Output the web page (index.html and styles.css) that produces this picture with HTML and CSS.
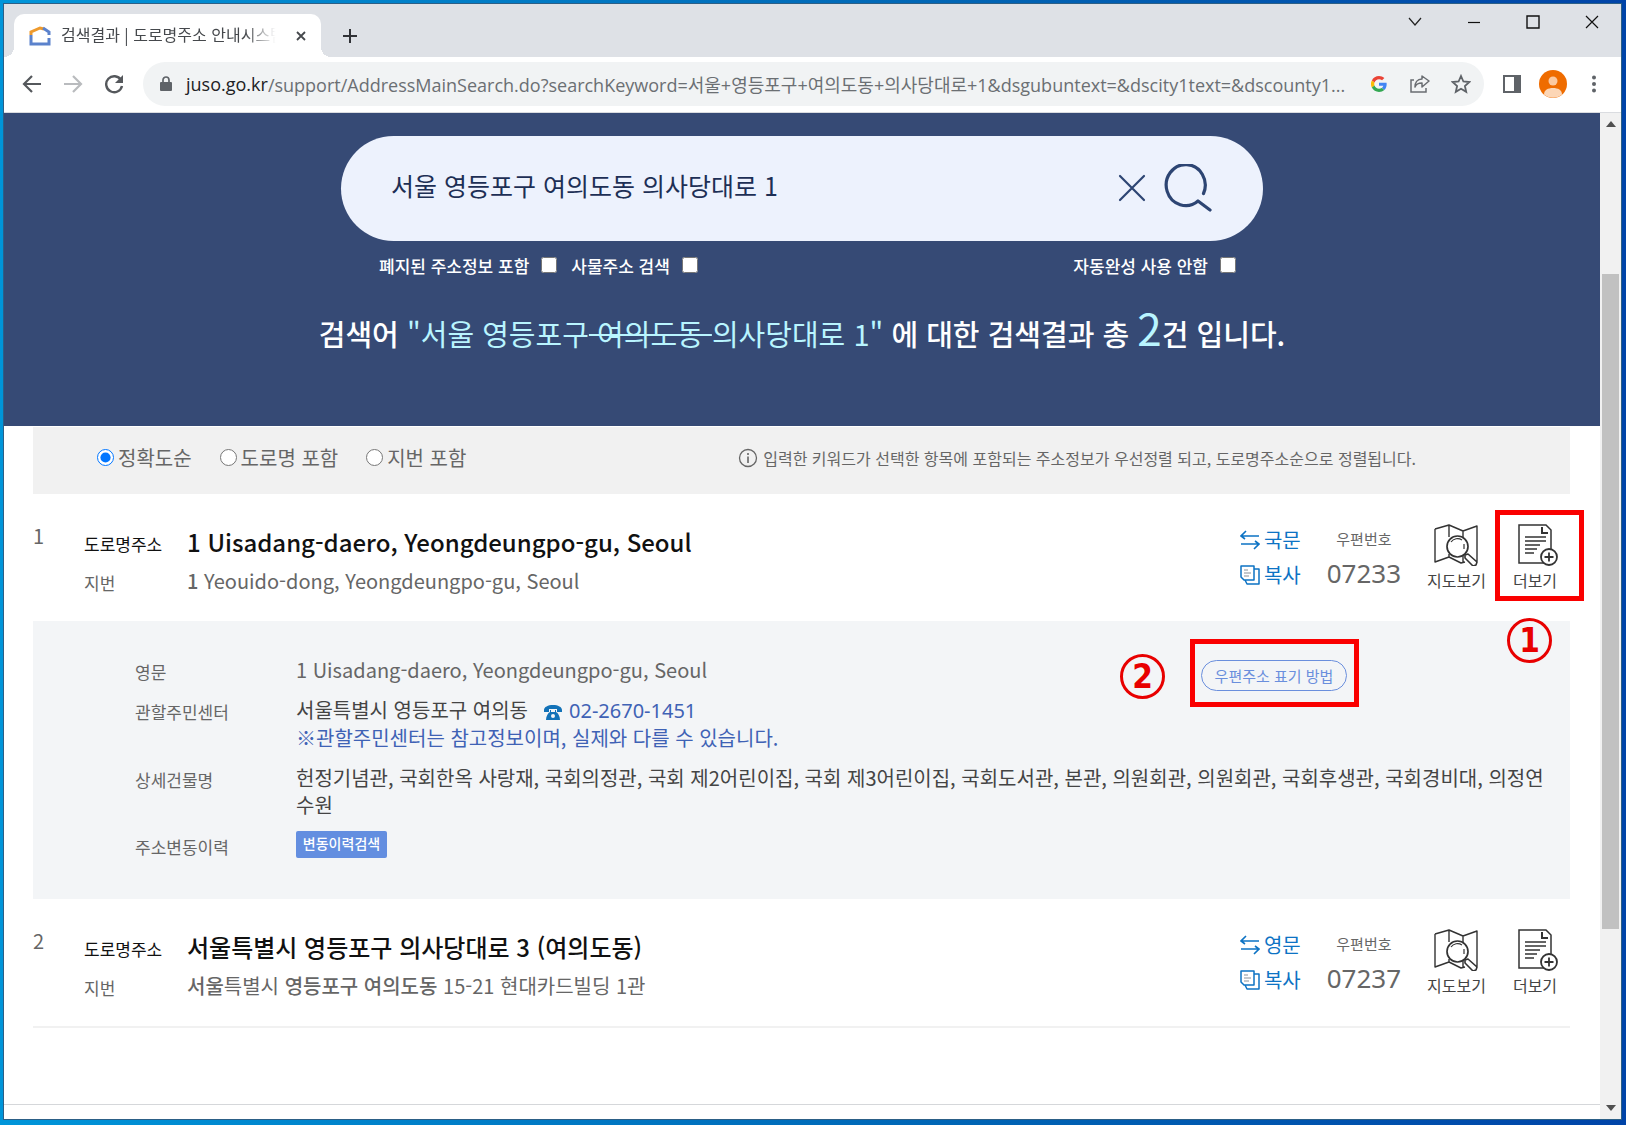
FILE: index.html
```html
<!DOCTYPE html>
<html lang="ko">
<head>
<meta charset="utf-8">
<meta name="viewport" content="width=device-width, initial-scale=1">
<title>검색결과 | 도로명주소 안내시스템</title>
<link rel="stylesheet" href="styles.css">
</head>
<body>
<svg class="sprite" aria-hidden="true">
  <symbol id="i-swap" viewBox="0 0 20 20"><path d="M19 6H1M6 1 1 6l4 3M1 14h18M14 19l5-5-4-3" fill="none" stroke="currentColor" stroke-width="1.6"/></symbol>
  <symbol id="i-copy" viewBox="0 0 20 20"><path d="M1 1h13v14H4l-3-3zM14 4h5v15H7l-2-4" fill="none" stroke="currentColor" stroke-width="1.5" stroke-linejoin="round"/><path d="M4 5h4M4 8h7M4 11h5" stroke="#8a9199" stroke-width="1"/></symbol>
  <symbol id="i-map" viewBox="0 0 45 42"><path d="M1 5 15 1l14 6 14-5v35l-5 1M1 5v33l14-5 12 6 4-1M15 1v12M15 30v3M29 7v6M29 32v7" fill="none" stroke="#333" stroke-width="1.4" stroke-linejoin="round"/><circle cx="23.500" cy="22.500" r="10.500" fill="#fff" stroke="#333" stroke-width="1.7"/><path d="M17 18a8 8 0 0 1 11-2M30 20v5" fill="none" stroke="#333" stroke-width="1.2"/><path d="m31 31 3-1 9 8-1 3-3 1-8-8z" fill="#fff" stroke="#333" stroke-width="1.6" stroke-linejoin="round"/></symbol>
  <symbol id="i-more" viewBox="0 0 40 42"><path d="M1 1h27l5 5v33H1z" fill="#fff" stroke="#333" stroke-width="1.5"/><path d="M24 3v6h6" fill="none" stroke="#333" stroke-width="2"/><path d="M7 13h21M7 17h21M7 21h15M7 25h12M7 29h9" stroke="#333" stroke-width="1.3"/><circle cx="31" cy="33" r="8" fill="#fff" stroke="#333" stroke-width="1.8"/><path d="M31 28.500v9M26.500 33h9" stroke="#333" stroke-width="1.8"/></symbol>
</svg>

<div class="window">
  <header class="tabstrip">
    <div class="tab">
      <svg class="favicon" viewBox="0 0 22 20"><path d="M2 9V6l9-4 4 1" fill="none" stroke="#ee9a2d" stroke-width="3"/><path d="M14 2l6 4v3M2 9v9h18v-6" fill="none" stroke="#5b82cc" stroke-width="3"/></svg>
      <span class="tab-title">검색결과 | 도로명주소 안내시스템</span>
      <button class="tab-close" aria-label="탭 닫기"><svg viewBox="0 0 12 12" width="12" height="12"><path d="m2 2 8 8M10 2l-8 8" stroke="#45484c" stroke-width="1.8"/></svg></button>
    </div>
    <button class="new-tab" aria-label="새 탭"><svg viewBox="0 0 16 16" width="16" height="16"><path d="M8 1v14M1 8h14" stroke="#303236" stroke-width="2"/></svg></button>
    <div class="window-controls">
      <button aria-label="탭 검색"><svg viewBox="0 0 14 14" width="14" height="14"><path d="m1 3 6 7 6-7" fill="none" stroke="#222" stroke-width="1.200"/></svg></button>
      <button aria-label="최소화"><svg viewBox="0 0 14 14" width="14" height="14"><path d="M1 7.500h12" stroke="#111" stroke-width="1.200"/></svg></button>
      <button aria-label="최대화"><svg viewBox="0 0 14 14" width="14" height="14"><path d="M1 1h12v12H1z" fill="none" stroke="#111" stroke-width="1.400"/></svg></button>
      <button aria-label="닫기"><svg viewBox="0 0 14 14" width="14" height="14"><path d="m1 1 12 12M13 1 1 13" stroke="#111" stroke-width="1.200"/></svg></button>
    </div>
  </header>

  <div class="toolbar">
    <nav class="nav-buttons">
      <button aria-label="뒤로"><svg viewBox="0 0 20 20" width="20" height="20"><path d="M19 10H2M10 2l-8 8 8 8" fill="none" stroke="#55585c" stroke-width="2.200"/></svg></button>
      <button aria-label="앞으로"><svg viewBox="0 0 20 20" width="20" height="20"><path d="M1 10h17M10 2l8 8-8 8" fill="none" stroke="#b9bbbe" stroke-width="2.200"/></svg></button>
      <button aria-label="새로고침"><svg viewBox="0 0 20 20" width="20" height="20"><path d="M17 6a8 8 0 1 0 1 6" fill="none" stroke="#55585c" stroke-width="2.400"/><path d="M19 1v8h-8z" fill="#55585c"/></svg></button>
    </nav>
    <div class="omnibox">
      <svg class="lock" viewBox="0 0 12 16"><path d="M3 7V4a3 3 0 0 1 6 0v3" fill="none" stroke="#5f6368" stroke-width="1.700"/><rect x="0" y="6" width="12" height="9" rx="1" fill="#5f6368"/></svg>
      <label class="host" for="url">juso.go.kr</label>
      <input class="url" id="url" type="text" value="/support/AddressMainSearch.do?searchKeyword=서울+영등포구+여의도동+의사당대로+1&amp;dsgubuntext=&amp;dscity1text=&amp;dscounty1...">
      <div class="omni-actions">
        <button aria-label="Google"><svg viewBox="0 0 48 48" width="16" height="16"><path fill="#ea4335" d="M24 9.500c3.500 0 6.700 1.200 9.200 3.600l6.900-6.900C35.900 2.400 30.500 0 24 0 14.600 0 6.500 5.400 2.600 13.200l8 6.200C12.400 13.700 17.700 9.500 24 9.500z"/><path fill="#4285f4" d="M47 24.600c0-1.600-.2-3.100-.4-4.600H24v9h12.900c-.6 3-2.200 5.500-4.700 7.200l7.700 6C44.400 38 47 31.800 47 24.600z"/><path fill="#fbbc05" d="M10.500 28.600a14.500 14.500 0 0 1 0-9.200l-8-6.200a24 24 0 0 0 0 21.600z"/><path fill="#34a853" d="M24 48c6.500 0 11.900-2.100 15.900-5.800l-7.700-6c-2.200 1.500-4.900 2.300-8.200 2.300-6.300 0-11.600-4.200-13.500-9.900l-8 6.200C6.500 42.600 14.600 48 24 48z"/></svg></button>
        <button aria-label="공유"><svg viewBox="0 0 20 18" width="20" height="18"><path d="M4 5H1v12h15v-4" fill="none" stroke="#6a6d71" stroke-width="1.500"/><path d="M12 4V1l7 5-7 6V8c-3 0-6 1-7 4 0-4 2-8 7-8z" fill="none" stroke="#6a6d71" stroke-width="1.500" stroke-linejoin="round"/></svg></button>
        <button aria-label="북마크"><svg viewBox="0 0 20 20" width="20" height="20"><path d="m10 2 2.400 5.500 6 .5-4.500 4 1.300 5.800L10 14.700l-5.200 3.100L6.100 12 1.600 8l6-.5z" fill="none" stroke="#5f6368" stroke-width="1.800"/></svg></button>
      </div>
    </div>
    <div class="browser-actions">
      <button aria-label="측면 패널"><svg viewBox="0 0 18 18" width="18" height="18"><path d="M1 1h16v16H1z" fill="none" stroke="#5f6368" stroke-width="2"/><path d="M11 1h6v16h-6z" fill="#5f6368"/></svg></button>
      <button aria-label="프로필"><svg viewBox="0 0 28 28" width="28" height="28"><circle cx="14" cy="14" r="14" fill="#ef6c00"/><circle cx="14" cy="11" r="4.500" fill="#fbc9a0"/><path d="M5 24.500c0-4.500 4-6.500 9-6.500s9 2 9 6.500a14 14 0 0 1-18 0z" fill="#fcd6b6"/></svg></button>
      <button aria-label="메뉴"><svg viewBox="0 0 4 18" width="4" height="18"><circle cx="2" cy="2.500" r="2" fill="#5f6368"/><circle cx="2" cy="9" r="2" fill="#5f6368"/><circle cx="2" cy="15.500" r="2" fill="#5f6368"/></svg></button>
    </div>
  </div>

  <div class="viewport">
    <main class="page">
      <section class="hero">
        <form class="search">
          <div class="search-box">
            <input class="keyword" type="text" aria-label="검색어" value="서울 영등포구 여의도동 의사당대로 1">
            <button type="button" aria-label="지우기"><svg viewBox="0 0 28 28" width="28" height="28"><path d="m2 2 24 24M26 2 2 26" stroke="#2d4573" stroke-width="2.200" stroke-linecap="round"/></svg></button>
            <button type="button" aria-label="검색"><svg viewBox="0 0 48 48" width="48" height="48"><path d="M39.500 29.500A19.500 20.500 0 1 0 34 37l12 9" fill="none" stroke="#2d4573" stroke-width="3.200" stroke-linecap="round" stroke-linejoin="round"/></svg></button>
          </div>
          <div class="search-options">
            <label>폐지된 주소정보 포함<input type="checkbox"></label>
            <label>사물주소 검색<input type="checkbox"></label>
            <label class="auto">자동완성 사용 안함<input type="checkbox"></label>
          </div>
        </form>
        <h1 class="summary">검색어 <span class="term">"서울 영등포구<s> 여의도동 </s>의사당대로 1"</span> 에 대한 검색결과 총 <span class="count">2</span>건 입니다.</h1>
      </section>

      <div class="content">
        <div class="sortbar">
          <label><input type="radio" name="sort" checked>정확도순</label>
          <label><input type="radio" name="sort">도로명 포함</label>
          <label><input type="radio" name="sort">지번 포함</label>
          <p class="sort-info"><svg viewBox="0 0 20 20" width="20" height="20"><circle cx="10" cy="10" r="8.500" fill="none" stroke="#666" stroke-width="1.300"/><path d="M10 8.500V15M10 5v2" stroke="#666" stroke-width="1.600"/></svg>입력한 키워드가 선택한 항목에 포함되는 주소정보가 우선정렬 되고, 도로명주소순으로 정렬됩니다.</p>
        </div>

        <article class="result">
          <span class="number">1</span>
          <dl class="address">
            <dt class="road">도로명주소</dt><dd class="road">1 Uisadang-daero, Yeongdeungpo-gu, Seoul</dd>
            <dt>지번</dt><dd><b>1</b> Yeouido-dong, Yeongdeungpo-gu, Seoul</dd>
          </dl>
          <div class="actions">
            <div class="links">
              <a href="#"><svg><use href="#i-swap"/></svg>국문</a>
              <a href="#"><svg><use href="#i-copy"/></svg>복사</a>
            </div>
            <div class="zip"><span>우편번호</span><strong>07233</strong></div>
            <button class="tool"><svg class="map"><use href="#i-map"/></svg>지도보기</button>
            <button class="tool more"><svg><use href="#i-more"/></svg>더보기<span class="mark"></span><span class="badge">1</span></button>
          </div>
        </article>

        <dl class="details">
          <dt>영문</dt>
          <dd class="english">1 Uisadang-daero, Yeongdeungpo-gu, Seoul<button class="postal">우편주소 표기 방법<span class="mark"></span><span class="badge">2</span></button></dd>
          <dt>관할주민센터</dt>
          <dd class="dark">서울특별시 영등포구 여의동<a class="phone" href="tel:02-2670-1451"><svg viewBox="0 0 18 15" width="18" height="15"><path d="M0 5c0-3 4-5 9-5s9 2 9 5v2h-5V4H5v3H0z" fill="#1272b8"/><path d="M6 5h1v2h4V5h1v2c2 1 4 4 4 8H2c0-4 2-7 4-8z" fill="#1272b8"/><circle cx="9" cy="11" r="2" fill="#f3f5f7"/></svg>02-2670-1451</a>
            <p class="note">※관할주민센터는 참고정보이며, 실제와 다를 수 있습니다.</p></dd>
          <dt>상세건물명</dt>
          <dd class="dark">헌정기념관, 국회한옥 사랑재, 국회의정관, 국회 제2어린이집, 국회 제3어린이집, 국회도서관, 본관, 의원회관, 의원회관, 국회후생관, 국회경비대, 의정연수원</dd>
          <dt>주소변동이력</dt>
          <dd><button class="history">변동이력검색</button></dd>
        </dl>

        <article class="result last">
          <span class="number">2</span>
          <dl class="address">
            <dt class="road">도로명주소</dt><dd class="road">서울특별시 영등포구 의사당대로 3 (여의도동)</dd>
            <dt>지번</dt><dd><b>서울</b>특별시 <b>영등포구 여의도동</b> 15-21 현대카드빌딩 1관</dd>
          </dl>
          <div class="actions">
            <div class="links">
              <a href="#"><svg><use href="#i-swap"/></svg>영문</a>
              <a href="#"><svg><use href="#i-copy"/></svg>복사</a>
            </div>
            <div class="zip"><span>우편번호</span><strong>07237</strong></div>
            <button class="tool"><svg class="map"><use href="#i-map"/></svg>지도보기</button>
            <button class="tool more"><svg><use href="#i-more"/></svg>더보기</button>
          </div>
        </article>
      </div>
      <footer class="page-end"></footer>
    </main>
    <div class="scrollbar" aria-hidden="true">
      <svg viewBox="0 0 10 6" width="10" height="6"><path d="M0 6 5 0l5 6z" fill="#505050"/></svg>
      <div class="track"><div class="thumb"></div></div>
      <svg viewBox="0 0 10 6" width="10" height="6"><path d="M0 0h10L5 6z" fill="#505050"/></svg>
    </div>
  </div>
</div>
</body>
</html>
```

FILE: styles.css
```css
* { box-sizing: border-box; }

body {
  margin: 0;
  min-height: 100vh;
  display: flex;
  padding: 3px 4px 5px 3px;
  background: linear-gradient(90deg, #0095d9, #0064b4 60%, #0044a8);
  font-family: "Noto Sans CJK KR", "Noto Sans", sans-serif;
  color: #666;
}

button {
  display: flex;
  align-items: center;
  justify-content: center;
  margin: 0;
  padding: 0;
  border: 0;
  background: none;
  font: inherit;
  color: inherit;
}

input { font: inherit; margin: 0; }
svg { display: block; flex: none; }
a { color: inherit; text-decoration: none; }
dl, dd, p, h1 { margin: 0; }
.sprite { position: absolute; width: 0; height: 0; }

.window {
  flex: 1;
  min-width: 0;
  display: flex;
  flex-direction: column;
  border: 1px solid #2c5f86;
  background: #fff;
}

/* Browser tab strip */
.tabstrip {
  display: flex;
  height: 53px;
  padding: 10px 0 0 10px;
  background: #dee1e6;
}

.tab {
  position: relative;
  display: flex;
  align-items: center;
  width: 307px;
  padding: 0 14px 0 15px;
  border-radius: 10px 10px 0 0;
  background: #fff;
}

.tab::before, .tab::after {
  content: "";
  position: absolute;
  bottom: 0;
  width: 10px;
  height: 10px;
}
.tab::before { left: -10px; background: radial-gradient(circle at 0 0, #dee1e6 10px, #fff 10px); }
.tab::after { right: -10px; background: radial-gradient(circle at 100% 0, #dee1e6 10px, #fff 10px); }

.favicon { width: 22px; height: 20px; margin-right: 10px; }

.tab-title {
  flex: 1;
  min-width: 0;
  padding-bottom: 4px;
  overflow: hidden;
  white-space: nowrap;
  font-size: 16px;
  line-height: 24px;
  color: #45484c;
  -webkit-mask-image: linear-gradient(90deg, #000 84%, transparent 98%);
  mask-image: linear-gradient(90deg, #000 84%, transparent 98%);
}

.tab-close { width: 12px; height: 24px; margin-left: 15px; }
.new-tab { width: 58px; }

.window-controls { display: flex; margin: -10px 0 0 auto; }
.window-controls button { width: 59px; height: 36px; }

/* Address bar */
.toolbar {
  display: flex;
  align-items: center;
  height: 56px;
  padding-bottom: 2px;
  border-bottom: 1px solid #dadce0;
}

.nav-buttons, .omni-actions, .browser-actions { display: flex; }
.nav-buttons { padding: 0 9px 0 7px; }
.nav-buttons button, .omni-actions button, .browser-actions button { width: 41px; height: 41px; }

.omnibox {
  flex: 1;
  min-width: 0;
  display: flex;
  align-items: center;
  height: 44px;
  padding: 0 3px 0 17px;
  border-radius: 22px;
  background: #f1f3f4;
  font-family: "Open Sans", "Noto Sans CJK KR", sans-serif;
  font-size: 18px;
}

.lock { width: 12px; height: 16px; margin-right: 14px; }
.host { color: #202124; }

.url {
  flex: 1;
  min-width: 0;
  height: 36px;
  padding: 0;
  border: 0;
  background: none;
  color: #6b6f73;
}

.browser-actions { padding: 0 7px; }

/* Scrolling area */
.viewport { flex: 1; display: flex; }
.page { flex: 1; min-width: 0; display: flex; flex-direction: column; }

.scrollbar {
  display: flex;
  flex-direction: column;
  align-items: center;
  justify-content: space-between;
  width: 21px;
  padding: 8px 0;
  background: #f1f1f1;
}

.track { flex: 1; width: 17px; }
.thumb { height: 67%; margin-top: 147px; background: #c1c1c1; }

/* Search header */
.hero {
  display: flex;
  flex-direction: column;
  align-items: center;
  padding: 23px 0 63px;
  background: #364a75;
  color: #fff;
}

.search { width: min(922px, 90%); }

.search-box {
  display: flex;
  align-items: center;
  gap: 18px;
  height: 105px;
  padding: 0 51px 2px 50px;
  border-radius: 53px;
  background: #edf2fd;
}

.keyword {
  flex: 1;
  min-width: 0;
  height: 48px;
  padding: 0 0 6px;
  border: 0;
  background: none;
  font-size: 25px;
  color: #1d2f55;
}

.search-options {
  display: flex;
  align-items: center;
  gap: 14px;
  height: 48px;
  padding: 0 27px 0 38px;
  font-size: 17px;
  font-weight: 500;
}

.search-options label { display: flex; align-items: center; gap: 12px; }
.search-options input { width: 16px; height: 16px; }
.search-options .auto { margin-left: auto; }

.summary {
  margin-top: 14px;
  font-size: 29px;
  font-weight: 500;
  line-height: 60px;
}

.term, .count { color: #b9f5ff; font-weight: 400; }
.term s { text-decoration-thickness: 2px; }
.count { font-size: 44px; line-height: 44px; }

/* Result list */
.content { padding: 1px 30px 0 29px; }

.sortbar {
  display: flex;
  align-items: center;
  gap: 28px;
  height: 67px;
  padding: 0 154px 6px 64px;
  background: #f1f1f1;
  font-size: 20px;
}

.sortbar label { display: flex; align-items: center; gap: 4px; }
.sortbar input { width: 17px; height: 17px; }

.sort-info {
  display: flex;
  align-items: center;
  gap: 5px;
  margin-left: auto;
  font-size: 16px;
}

.result {
  display: flex;
  align-items: flex-start;
  padding: 28px 12px 21px 0;
}
.result.last { border-bottom: 2px solid #f1f1f1; }

.number { width: 51px; font-size: 20px; line-height: 28px; }

.address {
  flex: 1;
  display: grid;
  grid-template-columns: 103px 1fr;
  grid-auto-rows: 39px;
  line-height: 39px;
  font-size: 20px;
}

.address dt { padding-top: 2px; font-size: 17px; }
.address .road { color: #111; }
.address dd.road { font-size: 24px; font-weight: 500; }
.address b { font-weight: 500; }

.actions { display: flex; align-items: flex-start; gap: 26px; }

.links { font-size: 20px; line-height: 35px; color: #0d73c4; }
.links a { display: flex; align-items: center; gap: 4px; }
.links svg { width: 20px; height: 20px; }

.zip { text-align: center; line-height: 34px; }
.zip span, .zip strong { display: block; }
.zip span { font-size: 15px; }
.zip strong { font-family: "Noto Sans", sans-serif; font-size: 26px; font-weight: 400; }

.tool {
  position: relative;
  flex-direction: column;
  gap: 2px;
  margin-top: 2px;
  font-size: 16px;
  line-height: 24px;
  color: #444;
}
.tool svg { width: 40px; height: 42px; }
.tool svg.map { width: 45px; }
.more svg { margin-left: 6px; }

/* Numbered callouts laid over the controls */
.mark { position: absolute; border: 5px solid #fa0000; }
.more .mark { inset: -14px -26px -9px -17px; }
.postal .mark { inset: -22px -13px -17px -12px; }

.badge {
  position: absolute;
  width: 45px;
  height: 45px;
  border: 3px solid #e80000;
  border-radius: 50%;
  font: bold 33px/39px "DejaVu Sans Condensed", "DejaVu Sans", sans-serif;
  text-align: center;
  color: #e80000;
}
.more .badge { top: 94px; left: -5px; }
.postal .badge { top: -7px; left: -82px; }

/* Expanded details */
.details {
  display: grid;
  grid-template-columns: 161px 1fr;
  row-gap: 13px;
  align-items: start;
  padding: 35px 20px 41px 102px;
  background: #f3f5f7;
  font-size: 20px;
  line-height: 27px;
}

.details dt { padding-top: 4px; font-size: 17px; line-height: 23px; }
.details .dark { color: #444; }

.english { display: flex; align-items: flex-start; justify-content: space-between; }

.postal {
  position: relative;
  width: 146px;
  height: 31px;
  margin: 4px 203px -8px 0;
  border: 1px solid #6a8fdd;
  border-radius: 16px;
  font-size: 15px;
  color: #6a8fdd;
}

.phone, .note { color: #3f62b5; }
.phone { margin-left: 16px; font-family: "Noto Sans", sans-serif; }
.phone svg { display: inline-block; margin-right: 7px; vertical-align: -2px; }

.history {
  width: 91px;
  height: 27px;
  padding-bottom: 2px;
  border-radius: 2px;
  background: #638ee0;
  font-size: 14px;
  font-weight: 500;
  color: #fff;
}

.page-end { height: 15px; margin-top: auto; border-top: 1px solid #d5d7da; }
```
